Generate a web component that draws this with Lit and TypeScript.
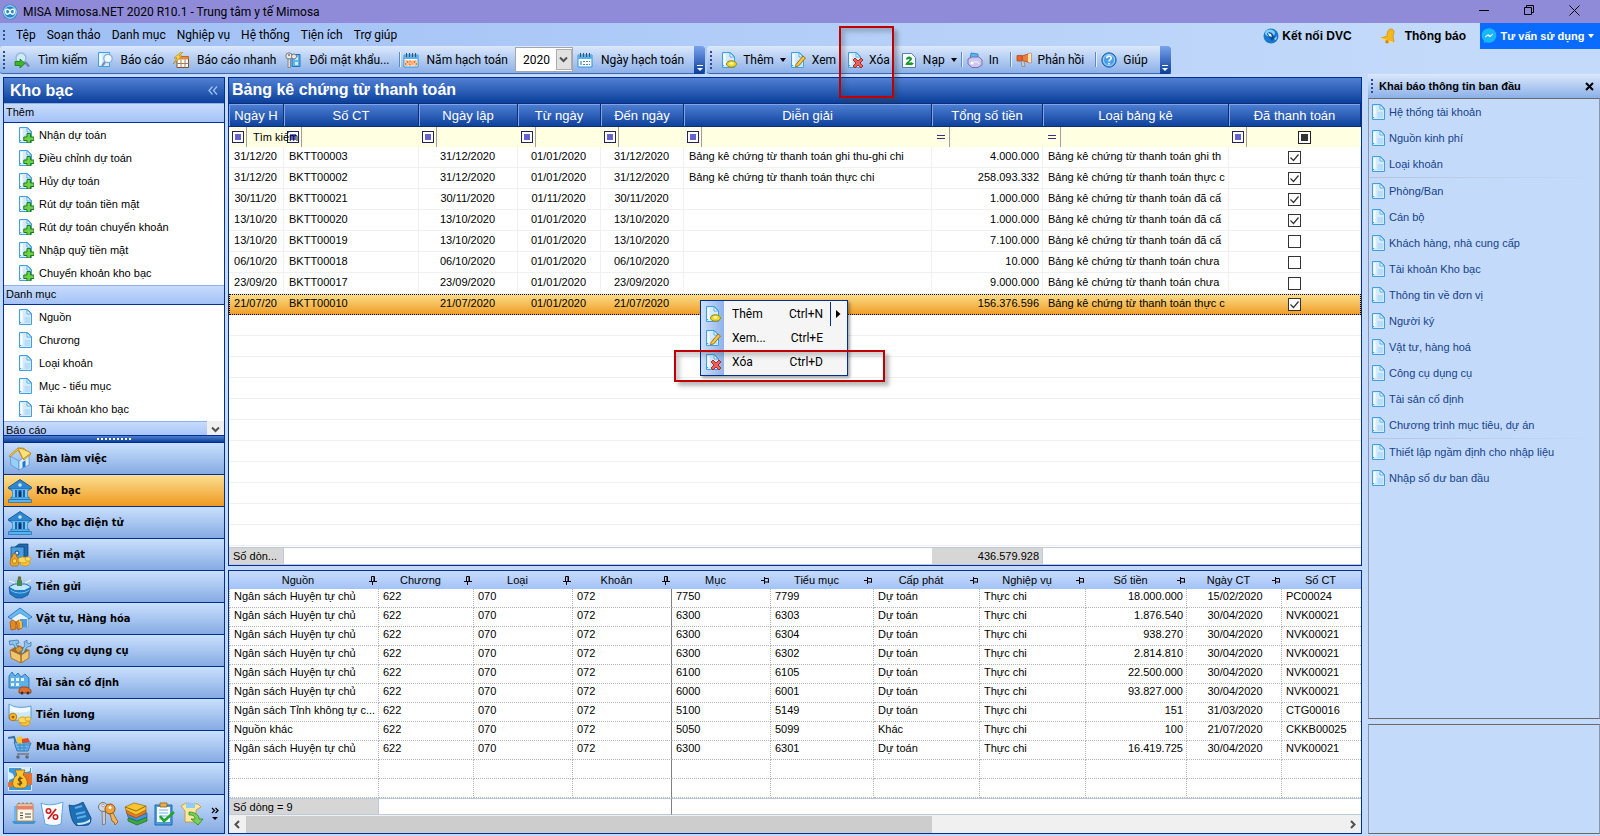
import { LitElement, html, css, svg, nothing } from "lit";
import { customElement, property } from "lit/decorators.js";
import { classMap } from "lit/directives/class-map.js";

const page = svg`<path d="M1.500 .5h8l4 4v11h-12z" fill="#d3ebfd" stroke="#3f9fe2"/><path d="M3.500 2v11" stroke="#fff" stroke-width="2"/><path d="M1 13.500h2" stroke="#3f9fe2"/><path d="M9 .8v4.200h4.200z" fill="#f4fbff" stroke="#3f9fe2" stroke-width=".8"/><path d="M6.500 8h5.500v6H6.500z" fill="#b9ddf9"/>`;
const coins = svg`<ellipse cx="17" cy="20" rx="5" ry="3" fill="#f7c531" stroke="#c98a10" stroke-width=".7"/><ellipse cx="15" cy="17" rx="5" ry="3" fill="#fbd95a" stroke="#c98a10" stroke-width=".7"/><ellipse cx="20" cy="16" rx="3" ry="2.200" fill="#fbd95a" stroke="#c98a10" stroke-width=".6"/>`;
const bag = svg`<path d="M5 13l-1-2h5l-1 2c3 2 4 9 1 10H4c-3-1-2-8 1-10z" fill="#f0a728" stroke="#a8640c" stroke-width=".7"/><circle cx="6.500" cy="18" r="2.300" fill="#fbd95a" stroke="#a8640c" stroke-width=".7"/>`;
const bank = svg`<path d="M0 8.500L12 .5l12 8-1 1.500H1z" fill="#2f86cf" stroke="#0f518f" stroke-width=".8"/><circle cx="12" cy="6" r="1.800" fill="#bfe4ff"/><path d="M3 9.500h18v2H3zM3 18h18v2.500H3zM.5 20.500h23v3H.5z" fill="#58b4f0" stroke="#1c6cb0" stroke-width=".7"/><path d="M4 11h16v7H4z" fill="#1b62a6"/><path d="M4.500 11H7v7H4.500zM17 11h2.500v7H17z" fill="#7fc8f7"/><path d="M9 11h1.500v7H9zM13.500 11H15v7h-1.500z" fill="#58b4f0"/><path d="M10.800 12.500h2.400V18h-2.400z" fill="#0b2f66"/>`;
const calendar = svg`<path d="M1 3h14v12H1z" fill="#fff" stroke="#2f93d8"/><path d="M1 3h14v4H1z" fill="#5ab1ea"/><path d="M3.500 1v4M6.500 1v4M9.500 1v4M12.500 1v4" stroke="#33536f"/>`;

const icons: Record<string, unknown> = {
  page,
  pageAdd: svg`${page}<path d="M9 6.500h3.500V10H16v3.500h-3.500V16H9v-2.500H5.800V10H9z" fill="#6fd04a" stroke="#1c7d1a"/>`,
  pageNew: svg`${page}<ellipse cx="10.500" cy="12" rx="5" ry="3.200" fill="#e9d52c" stroke="#9a8a10"/><ellipse cx="10.500" cy="11.500" rx="2.200" ry="1.300" fill="#fdf7a0"/>`,
  pageEdit: svg`${page}<path d="M6 12.500L13 4l2.500 2L8.500 14l-3 .8z" fill="#f5c63e" stroke="#9a6a12" stroke-width=".9"/>`,
  pageDelete: svg`${page}<path d="M6 8l2-2 3 3 3-3 2 2-3 3 3 3-2 2-3-3-3 3-2-2 3-3z" fill="#e8625a" stroke="#a8201c" stroke-width=".9"/>`,
  pageReload: svg`<path d="M1.500 1.500h9l4 4v10h-13z" fill="#f6fbff" stroke="#5b7fa8"/><path d="M5 7.500c0-4 6-4 6-.5 0 1.500-2 2-3 3.500h3.500V13H4.500c0-3 4-4 4-5.500 0-1-1.500-1-1.500 0zM10 10l3 1.500-3 2z" fill="#1b9a2a"/>`,
  search: svg`<circle cx="7" cy="6" r="5" fill="#cfe9fb" stroke="#8fb9de" stroke-width="1.500"/><path d="M11 10l4 4.500" stroke="#6f7fb0" stroke-width="2.500"/><path d="M1 9.500h5V7l5 4.500L6 16v-2.500H1z" fill="#3fb528" stroke="#1b7a13" stroke-width=".8"/>`,
  report: svg`<path d="M1.500 .5h11v14h-11z" fill="#d3ebfd" stroke="#3f9fe2"/><path d="M3.500 2v11" stroke="#fff" stroke-width="2"/><circle cx="11" cy="6.500" r="4.200" fill="#eef8ff" stroke="#86afd6" stroke-width="1.300"/><path d="M8 10l-3 4" stroke="#7c8fb4" stroke-width="2.200"/>`,
  quick: svg`<path d="M4 4.500h11.500v11H4z" fill="#fff" stroke="#8a4c1c"/><path d="M4 4.500h11.500v3H4z" fill="#e98c3a"/><path d="M4 11.500h11.500M8 7.500v8M12 7.500v8" stroke="#a08064"/><path d="M8 0L1 6h3L0 12l9-8H6l4-4z" fill="#f9d448" stroke="#b48310" stroke-width=".7"/>`,
  keys: svg`<path d="M7 2.500h8v12H7z" fill="#5eb6ee" stroke="#2274b4"/><path d="M10 5h3v3h-3zM10 10h3v3h-3z" fill="#cfeaff"/><circle cx="4" cy="4" r="3.200" fill="#e8e8ea" stroke="#77787c"/><circle cx="4" cy="3" r="1" fill="#77787c"/><path d="M3 7h2.500v8.500H3z" fill="#dcdcdf" stroke="#77787c" stroke-width=".8"/><circle cx="9" cy="4.500" r="2.500" fill="#e8e8ea" stroke="#77787c"/>`,
  year: svg`${calendar}<path d="M2 8h12v6H2z" fill="#fff3e0"/><path d="M2.500 9H4.500v2h-2v2h2M6 9h2v4H6zM10 8.500v5M13.500 9h-2v2h2v2h-2" fill="none" stroke="#ee7420"/>`,
  day: svg`${calendar}<path d="M4 9v4M6 9.500h2M9 9.500h2M12 9.500h1M6 12.500h2M9 12.500h2M12 12.500h1" stroke="#3d8cc4" stroke-width="1.200"/>`,
  print: svg`<path d="M3 7l1-6 7 1v5z" fill="#5ab4f0" stroke="#2d79bb" stroke-width=".8"/><path d="M1 7l4-2h7l3 3v5l-4 2.500H5L1 12z" fill="#cdc8ee" stroke="#7770b0"/><path d="M5 12c1-3 6-3 7 0" fill="none" stroke="#fff"/><circle cx="5" cy="11" r="1.500" fill="#fff"/>`,
  horn: svg`<path d="M6 4l9-3v10L6 8.500z" fill="#ee7d3a" stroke="#b24e16" stroke-width=".8"/><path d="M12 2l3-1v10l-3-1z" fill="#f8e3b4"/><path d="M1 3.500h5v5.500H1z" fill="#e8622c" stroke="#b24e16" stroke-width=".8"/><path d="M5 9h3l1 5.500H6z" fill="#c8cdd4" stroke="#7b8088" stroke-width=".7"/>`,
  help: svg`<circle cx="8" cy="8" r="7.200" fill="#4aa0e8" stroke="#1f5ea8"/><circle cx="8" cy="8" r="5.600" fill="none" stroke="#bfe0fa" stroke-width=".8"/><path d="M5.800 6.300c0-3 4.600-2.800 4.400-.2-.1 1.500-2.200 1.600-2.200 3.400M8 11v1.600" fill="none" stroke="#fff" stroke-width="1.600"/>`,
  app: svg`<circle cx="8" cy="8" r="7.500" fill="#2187c9"/><circle cx="8" cy="8" r="6.200" fill="none" stroke="#d6f0ff"/><path d="M8 7C6 4 3 5 3.500 8c.5 3 3.500 3 4.500 0 1 3 4 3 4.500 0C13 5 10 4 8 7z" fill="none" stroke="#fff" stroke-width="1.500"/>`,
  globe: svg`<circle cx="8" cy="8" r="7.500" fill="#1878cf"/><ellipse cx="7" cy="5" rx="5" ry="3.600" fill="#7fd0f8"/><path d="M6 4l3 1 3 5-3 3-3-4-2-3z" fill="#0d4f9c"/><path d="M11 11l3-3-1 4z" fill="#a6e4fc"/><path d="M5 5l3 1 1 3-3-1z" fill="#e9f9ff"/>`,
  bell: svg`<path d="M11 1c3 0 4 3 2 7l1 6-13-4 6-2c0-4 1-7 4-7z" fill="#f6b818" stroke="#c77f0c" stroke-width=".6"/><path d="M.8 9.500l13.500 4.500-2 1L1 11z" fill="#fbdc62"/><circle cx="7" cy="13.800" r="1.800" fill="#d8860e"/>`,
  messenger: svg`<circle cx="8" cy="7.500" r="7.300" fill="#18b6fb"/><path d="M3 13v2l3-1z" fill="#18b6fb"/><path d="M4 9L7 6.500l2 1.500 3-2L9 9 7 7.500z" fill="#fff" stroke="#fff" stroke-width=".6"/>`,
  home: svg`<path d="M2 9l9 5v9l-8-5z" fill="#9ad0f7" stroke="#4a90c8" stroke-width=".7"/><path d="M11 14l10-7v11l-10 5z" fill="#d6edff" stroke="#4a90c8" stroke-width=".7"/><path d="M10 1L1 9l1 1 8-7 5 9 1 1 7-6-1-1-7-5z" fill="#fbd052" stroke="#b78415" stroke-width=".8"/><path d="M10 1l5 11 8-6-8-4z" fill="#fce07c" stroke="#b78415" stroke-width=".8"/><path d="M14.500 15l3-1.500v6l-3 1.500z" fill="#2277c4"/>`,
  bank,
  cash: svg`<path d="M7 4l4-3h9v12l-4 5H7z" fill="#1f68ac" stroke="#0d4078" stroke-width=".7"/><path d="M3 4h13v14H3z" fill="#4b9fdf" stroke="#0d4078" stroke-width=".7"/><circle cx="9" cy="10" r="2" fill="#d5edff" stroke="#0d4078"/>${bag}${coins}`,
  deposit: svg`<path d="M1 12l5-3h12l5 3-3 8-6 3H8l-6-4z" fill="#1f78c2" stroke="#0e4d8c" stroke-width=".7"/><path d="M1.500 12l5-2.500h11l5 2.500-6 3H7z" fill="#bfe6ff"/><path d="M2.500 15c5 4 14 4 19 0" fill="none" stroke="#7fc8f7"/><path d="M9 6l2-5 3 5v5H9z" fill="#4a8a4c"/><circle cx="11.500" cy="3" r="1.800" fill="#7b6a3c"/><path d="M1 6l6 2M23 5l-6 3" stroke="#fff"/>`,
  stock: svg`<path d="M0 10L12 1l12 9-3 2-9-6-9 6z" fill="#68b8f2" stroke="#1d6cb2" stroke-width=".8"/><path d="M4 11l8-5 8 5v9H4z" fill="#e8f5ff" stroke="#4a90c8" stroke-width=".6"/><path d="M12 12h7v8h-7z" fill="#4a9de0"/><path d="M2 15l3-2 3 2v7l-5 1zM8 15l3-2 3 2v6l-4 2z" fill="#e58a22" stroke="#9c4f0a" stroke-width=".7"/><path d="M11 14l2 1v6" stroke="#fbd052" stroke-width="1.500" fill="none"/>`,
  tools: svg`<path d="M2 11l11 5v8L3 19zM13 16l8-5v8l-8 5z" fill="#f1c56e" stroke="#9a6518" stroke-width=".8"/><path d="M2 11l8-5 11 5-8 5z" fill="#a86c28"/><path d="M1 2l9-1 1 3-3 1 5 8-2 1-6-9-3 1z" fill="#8cc4ec" stroke="#386f9f" stroke-width=".7"/><path d="M13 13l4-7-1-3 3-2v3l2 1 2-2v4l-4 1-4 7z" fill="#8fc8ee" stroke="#386f9f" stroke-width=".7"/><path d="M7 10l5-3 3 4-5 3z" fill="#d99c3e" stroke="#8a5a18" stroke-width=".6"/>`,
  assets: svg`<path d="M1 5l3-4 3 4 3-3 3 4 4-3 4 4v10H1z" fill="#5fb0ea" stroke="#1f68a8" stroke-width=".8"/><path d="M3 7h3v3H3zM8 7h3v3H8zM13 7h3v3h-3zM3 12h3v3H3zM8 12h3v3H8z" fill="#e4f4ff"/><path d="M11 19l2-3h6l4 3v3H11z" fill="#e07030" stroke="#8c3a10" stroke-width=".8"/><circle cx="14" cy="22" r="1.500" fill="#333"/><circle cx="20" cy="22" r="1.500" fill="#333"/>`,
  salary: svg`<path d="M1 1c5 4 14 4 22 2v12c-7 4-16 3-22 1z" fill="#cfe8fb" stroke="#4a90c8" stroke-width=".8"/><path d="M2 2c5 4 13 4 20 2v4C15 10 8 10 2 8z" fill="#f0f9ff"/><circle cx="5" cy="14" r="3.800" fill="#f6bd2a" stroke="#a8640c" stroke-width=".8"/><circle cx="5" cy="14" r="1.500" fill="#a8640c"/>${coins}`,
  buy: svg`<path d="M0 3l6-1 4 13h10" fill="none" stroke="#3973a8" stroke-width="2"/><path d="M6 7l17 1-3 8H9z" fill="#68b4ee" stroke="#1f68a8" stroke-width=".8"/><path d="M9 10h13M9 13h11M12 7v8M16 8v8" stroke="#2f78b4" stroke-width=".7"/><circle cx="12" cy="5" r="3.500" fill="#fbc32a"/><path d="M14 4l6-1 2 4-8 1z" fill="#de4a28"/><path d="M9 19h12" stroke="#777" stroke-width="1.500"/><circle cx="10" cy="22" r="1.800" fill="#667"/><circle cx="19" cy="22" r="1.800" fill="#667"/>`,
  sell: svg`<path d="M.5 .5h23v23H.5z" fill="#3a9be2" stroke="#d9efff"/><path d="M16 6h8v12h-8zM0 15h5v5H0z" fill="#e8722a"/><path d="M1 5c4 1 5 3 5 6l-5 2zM13 1h9v3c-5 2-8 1-9-3z" fill="#d8efff"/><path d="M9 8L7 3h10l-2 5c5 3 6 12 1 13H8C3 20 4 11 9 8z" fill="#f9c42c" stroke="#9a6510" stroke-width=".8"/><path d="M14.500 11.500c-4-1.500-5.500 2-2.500 2.800s2 4-2.500 2.400M12 9.500v9.500" fill="none" stroke="#6e4405" stroke-width="1.200"/>`,
  invoice: svg`<path d="M0 19h24l-2 3H2z" fill="#3f93d6"/><path d="M2 4h3v15H2z" fill="#6ab8ef"/><path d="M5 2h16v17H5z" fill="#fff6e4" stroke="#b58c55"/><path d="M5 3.500h16v4H5z" fill="#e58468"/><path d="M7 2V.5M11 2V.5M15 2V.5M19 2V.5" stroke="#8a5a30"/><path d="M8 11h3M8 13.500h3M8 16h3M13 12h6M13 15h6" stroke="#4a4a4a"/>`,
  tax: svg`<path d="M1 1c6 3 14 2 22-1l-2 22c-5 2-10 2-16 0z" fill="#fbfcff" stroke="#5aa8e0"/><path d="M16 7l-8 10" stroke="#d01c1c" stroke-width="1.800"/><circle cx="8.500" cy="9" r="2.200" fill="none" stroke="#d01c1c" stroke-width="1.600"/><circle cx="15.500" cy="15" r="2.200" fill="none" stroke="#d01c1c" stroke-width="1.600"/>`,
  ledger: svg`<path d="M1 3c5 2 10-1 14-3l8 16c0 4-1 6-3 7l-11 1C4 21 2 12 1 3z" fill="#1d6fb6" stroke="#0d4078" stroke-width=".8"/><path d="M9 21c5 0 9-1 13-4v3c-4 2-8 3-12 3z" fill="#cfe9fb"/><path d="M7 6l7-2M8 12l9-2M9 16l9-2" stroke="#5fb0ea" stroke-width="2"/>`,
  keyring: svg`<circle cx="7" cy="5" r="4.500" fill="#d8d9de" stroke="#6f7278"/><circle cx="7" cy="3.500" r="1.300" fill="#fff" stroke="#6f7278" stroke-width=".6"/><path d="M6 9l3.500 1v12l-3 1z" fill="#c8c9ce" stroke="#6f7278" stroke-width=".8"/><circle cx="14" cy="7" r="5" fill="#f0a03c" stroke="#95530c"/><circle cx="14" cy="5.500" r="1.500" fill="#fff"/><path d="M14 12l3-1 5 9-3 3-1-3-2-1z" fill="#f0b45c" stroke="#95530c" stroke-width=".8"/>`,
  books: svg`<path d="M4 16l9 3 10-4v4l-10 4-9-4z" fill="#3fa83a" stroke="#1d6a1a" stroke-width=".7"/><path d="M3 11l9 4 11-4v4l-10 4-9-4z" fill="#3e98dc" stroke="#1c5a94" stroke-width=".7"/><path d="M2 8l10 4 10-4v3l-10 5-9-4z" fill="#e87a2a" stroke="#9a4408" stroke-width=".7"/><path d="M1 5l9-4 12 3v4l-10 5-10-5z" fill="#f6c52f" stroke="#9a6c08" stroke-width=".7"/><path d="M1 5l11 4 10-5" fill="none" stroke="#9a6c08"/>`,
  tasks: svg`<path d="M3 3h17v20H3z" fill="#4a9fe0" stroke="#1f68a8"/><path d="M5 5h13v15H5z" fill="#fff"/><path d="M8 1h7v4H8z" fill="#e8b048" stroke="#95600c" stroke-width=".8"/><path d="M7 8h9M7 11h9M7 14h9M7 17h9" stroke="#68b4ee"/><path d="M8 14l4 5 10-9" fill="none" stroke="#22a52a" stroke-width="2.600"/>`,
  export: svg`<path d="M1 4l5-3 12 1 3 3-5 3v12H5V9z" fill="#fae7a4" stroke="#c4942a" stroke-width=".8"/><path d="M6 1h9v5H6z" fill="#8fcdf8"/><path d="M9 10c6 0 10 3 10 7h4l-5 6-7-6h4c0-3-2-4-6-4z" fill="#7ad058" stroke="#2a8a1a" stroke-width=".8"/>`,
};

const icon = (name: string, size = 16) => {
  const box = size === 24 ? "0 0 24 24" : "0 0 16 16";
  return html`<svg class="icon" width=${size} height=${size} viewBox=${box} aria-hidden="true">${icons[name]}</svg>`;
};

const pin = (side: boolean) => html`<svg width="8" height="9" viewBox="0 0 8 9" aria-hidden="true">
  ${side
    ? svg`<path d="M0 4.500h3M3.500 1v7M4 2.500h3.500v4M4 6h4" fill="none" stroke="#000"/>`
    : svg`<path d="M2.500 5V.5h3V5M5 1v4M0 5.500h8M3.500 6v3" fill="none" stroke="#000"/>`}
</svg>`;

const chevron = (d: string) => html`<svg width="9" height="9" viewBox="0 0 9 9" aria-hidden="true"><path d=${d} fill="none" stroke="#505050" stroke-width="2"/></svg>`;

const resets = css`
  *, *::before, *::after { box-sizing: border-box; }
  button, input, select { font: inherit; color: inherit; margin: 0; padding: 0; border: 0; background: none; }
  button { text-align: left; }
  a { color: inherit; text-decoration: none; }
  ul { list-style: none; margin: 0; padding: 0; }
  h1, h2, h3 { margin: 0; font: inherit; }
  svg { display: block; flex: none; }
`;

@customElement("side-nav")
export class SideNav extends LitElement {
  static styles = [resets, css`
    :host { display: flex; flex-direction: column; min-height: 0; border: 1px solid #002d96; background: #fff; }
    .title { display: flex; align-items: center; justify-content: space-between; height: 25px; padding: 0 6px; color: #fff; font-size: 16px; font-weight: bold; background: linear-gradient(#5080d4, #0b3f9a); }
    .collapse { width: 10px; }
    .lists { flex: 1; min-height: 0; overflow: hidden; display: flex; flex-direction: column; }
    .group { flex: none; height: 20px; padding: 0 2px; line-height: 17px; border-top: 1px solid #8fb0ea; border-bottom: 1px solid #002d96; background: linear-gradient(#c7dcfc, #a4c2f7); }
    .links { flex: none; padding-bottom: 1px; }
    .link { display: flex; align-items: center; gap: 5px; height: 23px; padding-left: 14px; }
    .last { display: flex; height: 16px; align-items: stretch; }
    .last .group { flex: 1; border-bottom: 0; height: 16px; }
    .scroll { display: grid; place-items: center; width: 17px; background: #f0f0f0; }
    .grip { display: flex; gap: 2px; align-items: center; justify-content: center; height: 7px; border-top: 1px solid #002d96; background: linear-gradient(#5080d4, #0b3f9a); }
    .grip i { width: 2px; height: 2px; background: #fff; }
    .module { display: flex; align-items: center; gap: 4px; width: 100%; height: 32px; padding-left: 4px; border-top: 1px solid #002d96; font: bold 11px "DejaVu Sans Condensed", "DejaVu Sans", sans-serif; background: linear-gradient(#c9e0fd, #86abe3); }
    .module.active { background: linear-gradient(#fbdf90, #ef9a22); }
    .quick { display: flex; align-items: center; gap: 4px; height: 39px; padding: 0 5px 0 8px; border-top: 1px solid #002d96; background: linear-gradient(#c9e0fd, #86abe3); }
    .more { margin-left: auto; }
  `];
  private adds = ["Nhận dự toán", "Điều chỉnh dự toán", "Hủy dự toán", "Rút dự toán tiền mặt", "Rút dự toán chuyển khoản", "Nhập quỹ tiền mặt", "Chuyển khoản kho bạc"];
  private lists = ["Nguồn", "Chương", "Loại khoản", "Mục - tiểu mục", "Tài khoản kho bạc"];
  private modules: [string, string][] = [["home", "Bàn làm việc"], ["bank", "Kho bạc"], ["bank", "Kho bạc điện tử"], ["cash", "Tiền mặt"], ["deposit", "Tiền gửi"], ["stock", "Vật tư, Hàng hóa"], ["tools", "Công cụ dụng cụ"], ["assets", "Tài sản cố định"], ["salary", "Tiền lương"], ["buy", "Mua hàng"], ["sell", "Bán hàng"]];
  private quick: [string, string][] = [["invoice", "Hóa đơn"], ["tax", "Thuế"], ["ledger", "Sổ cái"], ["keyring", "Khóa sổ"], ["books", "Sổ sách"], ["tasks", "Kiểm tra"], ["export", "Xuất khẩu"]];
  private links(names: string[], glyph: string) {
    return html`<ul class="links">${names.map((n) => html`<li><a class="link" href="#">${icon(glyph)}${n}</a></li>`)}</ul>`;
  }
  render() {
    return html`
      <h2 class="title">Kho bạc
        <button class="collapse" aria-label="Thu gọn"><svg width="10" height="9" viewBox="0 0 10 9"><path d="M4.500 .5L1 4.500l3.500 4M9 .5L5.500 4.500 9 8.500" fill="none" stroke="#9fc0f5" stroke-width="1.300"/></svg></button>
      </h2>
      <div class="lists">
        <h3 class="group">Thêm</h3>
        ${this.links(this.adds, "pageAdd")}
        <h3 class="group">Danh mục</h3>
        ${this.links(this.lists, "page")}
        <div class="last"><h3 class="group">Báo cáo</h3><button class="scroll" aria-label="Cuộn xuống">${chevron("M1 2.500l3.500 3.500L8 2.500")}</button></div>
      </div>
      <div class="grip">${Array.from({ length: 9 }, () => html`<i></i>`)}</div>
      <nav>${this.modules.map(([g, n], i) => html`<button class=${classMap({ module: true, active: i === 1 })}>${icon(g, 24)}${n}</button>`)}</nav>
      <div class="quick">
        ${this.quick.map(([g, n]) => html`<button aria-label=${n}>${icon(g, 24)}</button>`)}
        <button class="more" aria-label="Thêm nút"><svg width="8" height="14" viewBox="0 0 8 14"><path d="M1 1l2.500 2.500L1 6M4.500 1L7 3.500 4.500 6" fill="none" stroke="#000" stroke-width="1.300"/><path d="M1 10h6l-3 3z"/></svg></button>
      </div>`;
  }
}

type Voucher = [string, string, string, string, string, string, string, string, boolean];

@customElement("voucher-grid")
export class VoucherGrid extends LitElement {
  static styles = [resets, css`
    :host { display: flex; flex-direction: column; min-width: 0; min-height: 0; border: 1px solid #002d96; background: #fff; }
    .title { height: 25px; padding: 0 3px; line-height: 24px; color: #fff; font-size: 16px; font-weight: bold; background: linear-gradient(#5080d4, #0b3f9a); }
    table { width: 100%; table-layout: fixed; border-collapse: separate; border-spacing: 0; }
    .w55 { width: 55px; } .w135 { width: 135px; } .w99 { width: 99px; } .w83 { width: 83px; } .w111 { width: 111px; } .w186 { width: 186px; } .w132 { width: 132px; }
    th { height: 24px; padding: 0; overflow: hidden; white-space: nowrap; color: #fff; font-size: 13px; font-weight: normal; border: 1px solid #0a2f78; border-width: 1px 1px 1px 0; box-shadow: inset 1px 1px #7fa5e8; background: linear-gradient(#4f80d5, #0f429c); }
    .filter td { height: 20px; padding: 0; background: #ffffe1; }
    .cell { display: flex; align-items: center; height: 20px; padding-left: 3px; }
    .op { display: grid; place-items: center; flex: none; width: 12px; height: 12px; border: 1px solid #22225c; background: #fff; }
    .op i { width: 6px; height: 6px; background: #6464cc; }
    .op.eq { border: 0; background: none; }
    .eq i { height: 4px; width: 8px; background: none; border: 1px solid #333380; border-width: 1px 0; }
    .bar { flex: none; align-self: stretch; width: 1px; margin-left: 2px; background: #a0a0a0; }
    .term { position: relative; z-index: 1; flex: none; width: 52px; margin-left: 6px; }
    .row td { height: 21px; padding: 0 3px 3px 4px; overflow: hidden; white-space: nowrap; border: 1px solid #f0f0f0; border-width: 0 1px 1px 0; }
    .row .tick { padding: 0; }
    .row .text { padding-left: 5px; padding-right: 0; }
    .row .center { padding-right: 4px; padding-left: 3px; text-align: center; }
    .num { text-align: right; }
    input.box { display: block; appearance: none; width: 13px; height: 13px; margin: 1px auto 0; border: 1px solid #333; background: #fff; }
    .box:checked { background: #fff url("data:image/svg+xml,%3Csvg xmlns='http://www.w3.org/2000/svg' viewBox='0 0 11 11'%3E%3Cpath d='M1.500 5.500l3 3L9.500 2.500' fill='none' stroke='%23333' stroke-width='1.200'/%3E%3C/svg%3E"); }
    .cell input.all { flex: none; margin: 0 auto; border: 1px solid #222; background: #333; box-shadow: inset 0 0 0 2px #fff; }
    .selected { background: linear-gradient(#fcde8c, #ef9b22); outline: 1px dotted #000; outline-offset: -1px; }
    .selected td { border-color: transparent; }
    .rest { flex: 1; min-height: 0; background: repeating-linear-gradient(#fff 0 20px, #f0f0f0 20px 21px); }
    .total { border-top: 1px solid #bccadb; border-bottom: 1px solid #bccadb; }
    .total td { height: 16px; padding: 0 3px 0 4px; white-space: nowrap; }
    .total .sum { background: #d6d6d6; border-right: 1px solid #bccadb; }
  `];
  private heads = ["Ngày H", "Số CT", "Ngày lập", "Từ ngày", "Đến ngày", "Diễn giải", "Tổng số tiền", "Loại bảng kê", "Đã thanh toán"];
  private rows: Voucher[] = [
    ["31/12/20", "BKTT00003", "31/12/2020", "01/01/2020", "31/12/2020", "Bảng kê chứng từ thanh toán ghi thu-ghi chi", "4.000.000", "Bảng kê chứng từ thanh toán ghi th", true],
    ["31/12/20", "BKTT00002", "31/12/2020", "01/01/2020", "31/12/2020", "Bảng kê chứng từ thanh toán thực chi", "258.093.332", "Bảng kê chứng từ thanh toán thực c", true],
    ["30/11/20", "BKTT00021", "30/11/2020", "01/11/2020", "30/11/2020", "", "1.000.000", "Bảng kê chứng từ thanh toán đã cấ", true],
    ["13/10/20", "BKTT00020", "13/10/2020", "01/01/2020", "13/10/2020", "", "1.000.000", "Bảng kê chứng từ thanh toán đã cấ", true],
    ["13/10/20", "BKTT00019", "13/10/2020", "01/01/2020", "13/10/2020", "", "7.100.000", "Bảng kê chứng từ thanh toán đã cấ", false],
    ["06/10/20", "BKTT00018", "06/10/2020", "01/01/2020", "06/10/2020", "", "10.000", "Bảng kê chứng từ thanh toán chưa", false],
    ["23/09/20", "BKTT00017", "23/09/2020", "01/01/2020", "23/09/2020", "", "9.000.000", "Bảng kê chứng từ thanh toán chưa", false],
    ["21/07/20", "BKTT00010", "21/07/2020", "01/01/2020", "21/07/2020", "", "156.376.596", "Bảng kê chứng từ thanh toán thực c", true],
  ];
  private cols() {
    return html`<colgroup>${["w55", "w135", "w99", "w83", "w83", "", "w111", "w186", "w132"].map((c) => html`<col class=${c}>`)}</colgroup>`;
  }
  render() {
    const align = ["center", "text", "center", "center", "center", "text", "num", "text"];
    return html`
      <h1 class="title">Bảng kê chứng từ thanh toán</h1>
      <table>
        ${this.cols()}
        <thead>
          <tr>${this.heads.map((h) => html`<th scope="col">${h}</th>`)}</tr>
          <tr class="filter">${this.heads.map((h, i) => html`<td><div class="cell">
            <button class=${classMap({ op: true, eq: i === 6 || i === 7 })} aria-label="Lọc ${h}"><i></i></button><span class="bar"></span>
            ${i === 0 ? html`<input class="term" aria-label="Tìm kiếm" .value=${"Tìm kiếm"}>` : nothing}
            ${i === 8 ? html`<input class="box all" type="checkbox" aria-label="Lọc đã thanh toán" .indeterminate=${true}>` : nothing}
          </div></td>`)}</tr>
        </thead>
        <tbody>${this.rows.map((r, n) => html`<tr class=${classMap({ row: true, selected: n === 7 })}>
          ${align.map((a, i) => html`<td class=${a}>${r[i]}</td>`)}
          <td class="tick"><input class="box" type="checkbox" aria-label="Đã thanh toán ${r[1]}" ?checked=${r[8]}></td>
        </tr>`)}</tbody>
      </table>
      <div class="rest"></div>
      <table class="total">
        ${this.cols()}
        <tbody><tr><td class="sum">Số dòn...</td><td colspan="5"></td><td class="sum num">436.579.928</td><td colspan="2"></td></tr></tbody>
      </table>`;
  }
}

@customElement("detail-grid")
export class DetailGrid extends LitElement {
  static styles = [resets, css`
    :host { display: block; min-width: 0; border: 1px solid #002d96; background: #fff; }
    table { width: 100%; table-layout: fixed; border-collapse: separate; border-spacing: 0; }
    .w150 { width: 150px; } .w95 { width: 95px; } .w99 { width: 99px; } .w103 { width: 103px; } .w106 { width: 106px; } .w101 { width: 101px; }
    thead { background: linear-gradient(#c7dcfc, #a4c2f7); }
    th { height: 18px; padding: 0; font-weight: normal; }
    .head { display: flex; align-items: center; gap: 2px; padding-right: 2px; }
    .head span { flex: 1; text-align: center; }
    td { height: 19px; padding: 0 0 4px 4px; overflow: hidden; white-space: nowrap; border: 1px dotted #b4b4b4; border-width: 0 1px 1px 0; }
    td:first-child { border-left-width: 1px; }
    td:last-child { border-right: 0; }
    td.frozen { border-right: 1px solid #808080; }
    td.center { padding-left: 2px; text-align: center; }
    .num { text-align: right; padding-right: 3px; }
    tfoot td { height: 17px; padding: 0 3px; border: 1px solid #bccadb; border-width: 1px 0; }
    tfoot .sum { background: #d6d6d6; border-right-width: 1px; }
    .scrollbar { display: flex; align-items: center; height: 18px; background: #f0f0f0; }
    .scrollbar button { display: grid; place-items: center; width: 17px; height: 17px; }
    .track { flex: 1; align-self: stretch; display: grid; grid-template-columns: 5fr 3fr; }
    .thumb { background: #cdcdcd; margin-top: 1px; }
  `];
  private heads = ["Nguồn", "Chương", "Loại", "Khoản", "Mục", "Tiểu mục", "Cấp phát", "Nghiệp vụ", "Số tiền", "Ngày CT", "Số CT"];
  private rows: string[][] = [
    ["Ngân sách Huyện tự chủ", "7750", "7799", "Dự toán", "18.000.000", "15/02/2020", "PC00024"],
    ["Ngân sách Huyện tự chủ", "6300", "6303", "Dự toán", "1.876.540", "30/04/2020", "NVK00021"],
    ["Ngân sách Huyện tự chủ", "6300", "6304", "Dự toán", "938.270", "30/04/2020", "NVK00021"],
    ["Ngân sách Huyện tự chủ", "6300", "6302", "Dự toán", "2.814.810", "30/04/2020", "NVK00021"],
    ["Ngân sách Huyện tự chủ", "6100", "6105", "Dự toán", "22.500.000", "30/04/2020", "NVK00021"],
    ["Ngân sách Huyện tự chủ", "6000", "6001", "Dự toán", "93.827.000", "30/04/2020", "NVK00021"],
    ["Ngân sách Tỉnh không tự c...", "5100", "5149", "Dự toán", "151", "31/03/2020", "CTG00016"],
    ["Nguồn khác", "5050", "5099", "Khác", "100", "21/07/2020", "CKKB00025"],
    ["Ngân sách Huyện tự chủ", "6300", "6301", "Dự toán", "16.419.725", "30/04/2020", "NVK00021"],
  ];
  render() {
    const full = this.rows.map(([s, m, t, c, v, d, n]) => [s, "622", "070", "072", m, t, c, "Thực chi", v, d, n]);
    const blank = Array.from({ length: 2 }, () => Array(11).fill(""));
    const cls = ["", "", "", "frozen", "", "", "", "", "num", "center", ""];
    return html`
      <table>
        <colgroup>${["w150", "w95", "w99", "w99", "w99", "w103", "w106", "w106", "w101", "w95", ""].map((c) => html`<col class=${c}>`)}</colgroup>
        <thead><tr>${this.heads.map((h, i) => html`<th scope="col"><div class="head"><span>${h}</span>${i < 10 ? pin(i > 3) : nothing}</div></th>`)}</tr></thead>
        <tbody>${[...full, ...blank].map((r) => html`<tr>${r.map((v, i) => html`<td class=${cls[i]}>${v}</td>`)}</tr>`)}</tbody>
        <tfoot><tr><td class="sum">Số dòng = 9</td><td colspan="2"></td><td class="frozen"></td><td colspan="7"></td></tr></tfoot>
      </table>
      <div class="scrollbar">
        <button aria-label="Cuộn trái">${chevron("M6 1L2.500 4.500 6 8")}</button>
        <div class="track"><div class="thumb"></div></div>
        <button aria-label="Cuộn phải">${chevron("M3 1l3.500 3.500L3 8")}</button>
      </div>`;
  }
}

@customElement("setup-panel")
export class SetupPanel extends LitElement {
  static styles = [resets, css`
    :host { display: flex; flex-direction: column; min-height: 0; }
    .head { display: flex; align-items: center; height: 24px; padding: 0 6px 0 3px; font: bold 11px "Liberation Sans", Arial, sans-serif; background: linear-gradient(#dbe8fc, #8bb0e8); }
    .grip { width: 2px; height: 14px; margin-right: 6px; background: repeating-linear-gradient(#2b4d8c 0 2px, transparent 2px 4px); }
    .close { margin-left: auto; }
    .panel { flex: 1; border: 1px solid #6a6a6a; border-color: #6a6a6a #8795b0; background: #c4dafa; }
    .note { height: 110px; margin-top: 5px; flex: none; }
    .link { display: flex; align-items: center; gap: 2px; height: 26px; padding-left: 2px; color: #15428b; }
    .split { height: 1px; background: linear-gradient(90deg, #b4c3da, #c4dafa); }
  `];
  private groups = [
    ["Hệ thống tài khoản", "Nguồn kinh phí", "Loại khoản"],
    ["Phòng/Ban", "Cán bộ", "Khách hàng, nhà cung cấp", "Tài khoản Kho bạc", "Thông tin về đơn vị", "Người ký", "Vật tư, hàng hoá", "Công cụ dụng cụ", "Tài sản cố định", "Chương trình mục tiêu, dự án"],
    ["Thiết lập ngầm định cho nhập liệu", "Nhập số dư ban đầu"],
  ];
  render() {
    return html`
      <h2 class="head"><span class="grip"></span>Khai báo thông tin ban đầu
        <button class="close" aria-label="Đóng"><svg width="9" height="9" viewBox="0 0 9 9"><path d="M1 1l7 7M8 1L1 8" stroke="#000" stroke-width="2"/></svg></button>
      </h2>
      <div class="panel">${this.groups.map((g, i) => html`${i ? html`<div class="split"></div>` : nothing}
        ${g.map((n) => html`<a class="link" href="#">${icon("page")}${n}</a>`)}`)}</div>
      <div class="panel note"></div>`;
  }
}

@customElement("popup-menu")
export class PopupMenu extends LitElement {
  static styles = [resets, css`
    :host { display: block; border: 1px solid #002d96; background: linear-gradient(90deg, #cfe1fb, #8fb2ea 23px, #f5f5f5 23px); box-shadow: 2px 2px 3px rgba(0, 0, 0, .35); padding: 1px 0; }
    .item { display: flex; align-items: center; width: 100%; height: 24px; padding-left: 4px; }
    .name { margin-left: 11px; flex: 1; }
    .more { display: flex; align-items: center; width: 17px; height: 24px; margin-left: 7px; padding-left: 5px; }
    .more.on { border-left: 1px solid #002d96; }
  `];
  private items: [string, string, string][] = [["pageNew", "Thêm", "Ctrl+N"], ["pageEdit", "Xem...", "Ctrl+E"], ["pageDelete", "Xóa", "Ctrl+D"]];
  render() {
    return html`${this.items.map(([g, n, k], i) => html`<button class="item" role="menuitem">${icon(g)}<span class="name">${n}</span><span>${k}</span>
      <span class=${classMap({ more: true, on: i === 0 })}>${i === 0 ? html`<svg width="5" height="8" viewBox="0 0 5 8"><path d="M0 0l4.500 4L0 8z"/></svg>` : nothing}</span></button>`)}`;
  }
}

@customElement("app-root")
export class AppRoot extends LitElement {
  @property({ type: String }) year = "2020";
  static styles = [resets, css`
    :host { display: flex; flex-direction: column; position: relative; height: 100vh; overflow: hidden; background: #c3dafa; color: #000; font: 11px "Liberation Sans", Arial, sans-serif; --ui: 12px Roboto, "Open Sans", sans-serif; }
    .titlebar { display: flex; align-items: center; gap: 5px; height: 23px; padding: 0 20px 0 2px; background: #8f8bd8; font: var(--ui); }
    .window { display: flex; align-items: center; gap: 34px; margin-left: auto; padding-bottom: 2px; }
    .top { position: relative; background: linear-gradient(90deg, #9ebef5, #c3dafa 90%); }
    .menubar { display: flex; align-items: center; gap: 11px; height: 23px; padding-left: 3px; font: var(--ui); }
    .dots { flex: none; width: 2px; height: 10px; background: repeating-linear-gradient(#2b4d8c 0 2px, transparent 2px 4px); }
    .bars { display: flex; gap: 2px; height: 28px; }
    .bar { display: flex; align-items: center; height: 28px; padding-left: 3px; border-radius: 3px 0 0 3px; border-bottom: 1px solid #3d66ae; background: linear-gradient(#dbe8fc, #8bb0e8); font: var(--ui); white-space: nowrap; }
    .bar .dots { height: 18px; margin-right: 9px; }
    .tool { display: flex; align-items: center; gap: 8px; height: 24px; margin-right: 9px; white-space: nowrap; }
    .actions .tool { gap: 6px; margin-right: 11px; }
    .tool.tight { margin-right: 0; }
    .actions .menu { margin-right: 4px; }
    .drop { width: 0; height: 0; border: 3px solid transparent; border-top: 4px solid #000; border-bottom: 0; }
    .sep { width: 1px; height: 15px; margin-right: 3px; background: #5f86c8; box-shadow: 1px 0 #e6f0ff; }
    .actions .sep { margin-right: 5px; }
    .year { appearance: none; width: 58px; height: 25px; margin: 0 4px 0 7px; padding-left: 7px; border: 1px solid #a6a6a6; background: #fff; }
    .picker { position: relative; display: flex; }
    .arrow { position: absolute; right: 5px; top: 2px; display: grid; place-items: center; width: 16px; height: 21px; border: 1px solid #adadad; background: #e1e1e1; pointer-events: none; }
    .overflow { display: flex; flex-direction: column; justify-content: flex-end; align-items: center; gap: 2px; width: 11px; height: 28px; margin-left: 1px; padding-bottom: 3px; border-radius: 0 3px 3px 0; background: linear-gradient(#78a2ec, #0a3e9a); }
    .overflow::before { content: ""; width: 6px; height: 1px; background: #fff; }
    .overflow::after { content: ""; border: 3px solid transparent; border-top-color: #fff; border-bottom: 0; }
    .links { position: absolute; right: 0; top: 0; display: flex; align-items: center; height: 26px; font: bold 12px "Liberation Sans", Arial, sans-serif; white-space: nowrap; }
    .links button { display: flex; align-items: center; gap: 3px; height: 26px; }
    .links .notice { gap: 9px; margin: 0 14px 0 28px; }
    .links .advice { justify-content: space-between; width: 120px; padding: 0 6px 0 1px; color: #fff; font-size: 11px; background: #0a6cff; }
    .advice .drop { border-top-color: #fff; }
    .body { flex: 1; min-height: 0; display: grid; grid-template-columns: 222px minmax(0, 1fr) 232px; padding-left: 3px; }
    side-nav { margin: 3px 0 2px; }
    .center { display: flex; flex-direction: column; gap: 4px; min-width: 0; min-height: 0; padding: 3px 6px 2px 3px; }
    voucher-grid { flex: 1; }
    setup-panel { margin-bottom: 2px; }
    popup-menu { position: absolute; left: 700px; top: 300px; width: 148px; font: var(--ui); }
    .mark { position: absolute; border: 2px solid #c00000; box-shadow: 4px 4px 4px rgba(60, 60, 60, .35), inset 4px 4px 4px rgba(60, 60, 60, .25); pointer-events: none; }
    .mark-tool { left: 839px; top: 26px; width: 55px; height: 72px; }
    .mark-menu { left: 674px; top: 350px; width: 211px; height: 32px; }
  `];
  private menus = ["Tệp", "Soạn thảo", "Danh mục", "Nghiệp vụ", "Hệ thống", "Tiện ích", "Trợ giúp"];
  private tool(glyph: string, name: string, menu = false) {
    return html`<button class=${classMap({ tool: true, menu })}>${icon(glyph)}${name}${menu ? html`<i class="drop"></i>` : nothing}</button>`;
  }
  render() {
    return html`
      <header class="titlebar">${icon("app")}<span>MISA Mimosa.NET 2020 R10.1 - Trung tâm y tế Mimosa</span>
        <div class="window">
          <button aria-label="Thu nhỏ"><svg width="11" height="11"><path d="M0 5.500h10" stroke="#000"/></svg></button>
          <button aria-label="Khôi phục"><svg width="11" height="11"><path d="M.5 2.500h7v7h-7zM2.500 2.500v-2h7v7h-2" fill="none" stroke="#000"/></svg></button>
          <button aria-label="Đóng"><svg width="11" height="11"><path d="M.5 .5l10 10M10.500 .5l-10 10" stroke="#000"/></svg></button>
        </div>
      </header>
      <div class="top">
        <nav class="menubar"><span class="dots"></span>${this.menus.map((m) => html`<button>${m}</button>`)}</nav>
        <div class="bars">
          <div class="bar"><span class="dots"></span>
            ${this.tool("search", "Tìm kiếm")}${this.tool("report", "Báo cáo")}${this.tool("quick", "Báo cáo nhanh")}${this.tool("keys", "Đổi mật khẩu...")}
            <span class="sep"></span>
            <label class="tool tight" for="year">${icon("year")}Năm hạch toán</label>
            <span class="picker"><select class="year" id="year"><option>${this.year}</option></select><span class="arrow">${chevron("M1 2.500l3.500 3.500L8 2.500")}</span></span>
            ${this.tool("day", "Ngày hạch toán")}
            <button class="overflow" aria-label="Tùy chọn"></button>
          </div>
          <div class="bar actions"><span class="dots"></span>
            ${this.tool("pageNew", "Thêm", true)}${this.tool("pageEdit", "Xem")}${this.tool("pageDelete", "Xóa")}${this.tool("pageReload", "Nạp", true)}
            <span class="sep"></span>${this.tool("print", "In")}<span class="sep"></span>${this.tool("horn", "Phản hồi")}<span class="sep"></span>${this.tool("help", "Giúp")}
            <button class="overflow" aria-label="Tùy chọn"></button>
          </div>
        </div>
        <div class="links">
          <button>${icon("globe")}Kết nối DVC</button>
          <button class="notice">${icon("bell")}Thông báo</button>
          <button class="advice">${icon("messenger")}Tư vấn sử dụng<i class="drop"></i></button>
        </div>
      </div>
      <main class="body">
        <side-nav></side-nav>
        <div class="center"><voucher-grid></voucher-grid><detail-grid></detail-grid></div>
        <setup-panel></setup-panel>
      </main>
      <popup-menu role="menu"></popup-menu>
      <div class="mark mark-tool"></div>
      <div class="mark mark-menu"></div>`;
  }
}
